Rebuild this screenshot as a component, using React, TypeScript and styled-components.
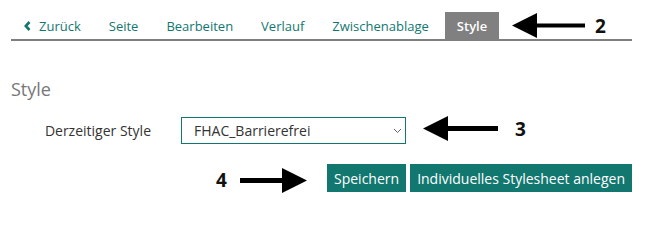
import React from 'react';
import styled, { createGlobalStyle } from 'styled-components';

const GlobalStyle = createGlobalStyle`
  html, body {
    margin: 0;
    padding: 0;
    background: #ffffff;
  }
  body {
    font-family: 'Open Sans', 'DejaVu Sans', sans-serif;
    color: #333333;
  }
`;

const TEAL = '#12776f';

const Page = styled.div`
  position: relative;
  width: 646px;
  height: 216px;
  padding: 12px 14px 0 11px;
  box-sizing: border-box;
  overflow: hidden;
`;

const Nav = styled.nav`
  display: flex;
  align-items: stretch;
  height: 27px;
  padding-left: 1px;
  border-bottom: 2px solid #808080;
`;

const Tab = styled.a<{ $active?: boolean }>`
  display: flex;
  align-items: center;
  gap: 8px;
  padding: 0 12px;
  margin-right: 4px;
  font-size: 13px;
  font-weight: ${(p) => (p.$active ? 600 : 500)};
  text-decoration: none;
  cursor: pointer;
  color: ${(p) => (p.$active ? '#ffffff' : TEAL)};
  background: ${(p) => (p.$active ? '#808080' : 'transparent')};
`;

const Heading = styled.h2`
  margin: 36px 0 0;
  font-size: 18px;
  line-height: 25px;
  font-weight: 400;
  color: #777777;
`;

const FormRow = styled.div`
  display: grid;
  grid-template-columns: 140px 225px;
  column-gap: 30px;
  align-items: center;
  margin-top: 15px;
`;

const Label = styled.label`
  text-align: right;
  font-size: 14px;
  color: #333333;
`;

const SelectWrap = styled.div`
  position: relative;
  height: 27px;
`;

const Select = styled.select`
  appearance: none;
  width: 100%;
  height: 100%;
  box-sizing: border-box;
  border: 1px solid ${TEAL};
  border-radius: 0;
  background: #ffffff;
  padding: 0 24px 0 12px;
  font-family: inherit;
  font-size: 14px;
  color: #333333;
  outline: none;
`;

const SelectChevron = styled.svg`
  position: absolute;
  right: 4px;
  top: 11px;
  pointer-events: none;
`;

const Actions = styled.div`
  display: flex;
  justify-content: flex-end;
  gap: 4px;
  margin-top: 20px;
`;

const Button = styled.button`
  height: 28px;
  padding: 0 7px;
  border: none;
  background: ${TEAL};
  color: #ffffff;
  font-family: inherit;
  font-size: 14px;
  cursor: pointer;
`;

const Marker = styled.div<{ $x: number; $y: number }>`
  position: absolute;
  left: ${(p) => p.$x}px;
  top: ${(p) => p.$y}px;
  display: flex;
  align-items: center;
`;

const MarkerNumber = styled.span`
  font-size: 19px;
  line-height: 19px;
  font-weight: 700;
  color: #111111;
`;

const Arrow: React.FC<{ dir: 'left' | 'right'; length: number; thick: number }> = ({ dir, length, thick }) => {
  const h = 25;
  const head = 25;
  const mid = h / 2;
  const points =
    dir === 'left'
      ? `0,${mid} ${head},0 ${head},${mid - thick / 2} ${length},${mid - thick / 2} ${length},${mid + thick / 2} ${head},${mid + thick / 2} ${head},${h}`
      : `${length},${mid} ${length - head},0 ${length - head},${mid - thick / 2} 0,${mid - thick / 2} 0,${mid + thick / 2} ${length - head},${mid + thick / 2} ${length - head},${h}`;
  return (
    <svg width={length} height={h} viewBox={`0 0 ${length} ${h}`}>
      <polygon points={points} fill='#000000' />
    </svg>
  );
};

const tabs = ['Seite', 'Bearbeiten', 'Verlauf', 'Zwischenablage'];

const App: React.FC = () => (
  <Page>
    <GlobalStyle />
    <Nav>
      <Tab>
        <svg width='7' height='10' viewBox='0 0 7 10'>
          <polyline points='5.5,1 1.8,5 5.5,9' fill='none' stroke={TEAL} strokeWidth='2.6' />
        </svg>
        Zurück
      </Tab>
      {tabs.map((t) => (
        <Tab key={t}>{t}</Tab>
      ))}
      <Tab $active>Style</Tab>
    </Nav>

    <Heading>Style</Heading>

    <FormRow>
      <Label htmlFor='style-select'>Derzeitiger Style</Label>
      <SelectWrap>
        <Select id='style-select' defaultValue='FHAC_Barrierefrei'>
          <option>FHAC_Barrierefrei</option>
        </Select>
        <SelectChevron width='9' height='6' viewBox='0 0 9 6'>
          <polyline points='1,1 4.5,4.5 8,1' fill='none' stroke='#666666' strokeWidth='1' />
        </SelectChevron>
      </SelectWrap>
    </FormRow>

    <Actions>
      <Button>Speichern</Button>
      <Button>Individuelles Stylesheet anlegen</Button>
    </Actions>

    <Marker $x={512} $y={13}>
      <Arrow dir='left' length={73} thick={4} />
    </Marker>
    <Marker $x={595} $y={17}>
      <MarkerNumber>2</MarkerNumber>
    </Marker>

    <Marker $x={423} $y={116}>
      <Arrow dir='left' length={75} thick={5} />
    </Marker>
    <Marker $x={515} $y={120}>
      <MarkerNumber>3</MarkerNumber>
    </Marker>

    <Marker $x={216} $y={171}>
      <MarkerNumber>4</MarkerNumber>
    </Marker>
    <Marker $x={240} $y={168}>
      <Arrow dir='right' length={67} thick={5} />
    </Marker>
  </Page>
);

export default App;
